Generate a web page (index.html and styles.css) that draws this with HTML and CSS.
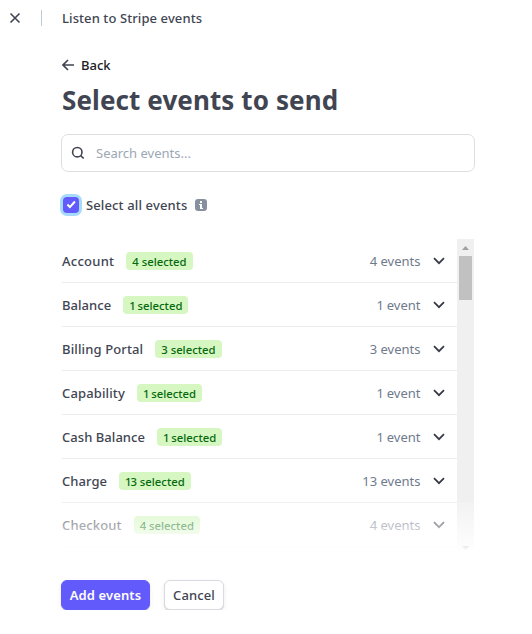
FILE: index.html
```html
<!DOCTYPE html>
<html lang="en">
<head>
<meta charset="utf-8">
<title>Listen to Stripe events</title>
<link rel="stylesheet" href="styles.css">
</head>
<body>
<header class="topbar">
  <svg class="close" width="12" height="12" viewBox="0 0 12 12"><path d="M1.5 1.5l9 9M10.5 1.5l-9 9"/></svg>
  <span class="divider"></span>
  <span class="topbar-title">Listen to Stripe events</span>
</header>
<main class="content">
  <a class="back"><svg width="12" height="12" viewBox="0 0 12 12"><path d="M6 1L1 6l5 5M1 6h11"/></svg><span>Back</span></a>
  <h1 class="title"><span>Select events to send</span></h1>
  <div class="search">
    <svg width="14" height="14" viewBox="0 0 14 14"><circle cx="6.3" cy="6.2" r="4.7"/><path d="M9.7 9.6l3 2.9"/></svg>
    <span>Search events...</span>
  </div>
  <div class="select-all">
    <span class="checkbox"><svg width="16" height="16" viewBox="0 0 16 16"><path d="M4.4 7.500l2.500 2.600 5-5.600"/></svg></span>
    <span class="select-label">Select all events</span>
    <svg class="info" width="12" height="12" viewBox="0 0 12 12"><rect width="12" height="12" rx="3" fill="#87909f"/><path d="M5 2h2v2H5zM4 5h3v4h1v1H5V6H4z" fill="#fff"/></svg>
  </div>
  <div class="list">
    <div class="rows">
      <div class="row"><span class="name wide">Account</span><span class="badge">4 selected</span><span class="count">4 events</span><svg class="chev" width="12" height="8" viewBox="0 0 12 8"><path d="M1 1.2l5 5 5-5"/></svg></div>
      <div class="row"><span class="name tight">Balance</span><span class="badge"><span class="one">1</span> selected</span><span class="count"><span class="one">1</span> event</span><svg class="chev" width="12" height="8" viewBox="0 0 12 8"><path d="M1 1.2l5 5 5-5"/></svg></div>
      <div class="row"><span class="name">Billing Portal</span><span class="badge">3 selected</span><span class="count">3 events</span><svg class="chev" width="12" height="8" viewBox="0 0 12 8"><path d="M1 1.2l5 5 5-5"/></svg></div>
      <div class="row"><span class="name">Capability</span><span class="badge"><span class="one">1</span> selected</span><span class="count"><span class="one">1</span> event</span><svg class="chev" width="12" height="8" viewBox="0 0 12 8"><path d="M1 1.2l5 5 5-5"/></svg></div>
      <div class="row"><span class="name tight">Cash Balance</span><span class="badge"><span class="one">1</span> selected</span><span class="count"><span class="one">1</span> event</span><svg class="chev" width="12" height="8" viewBox="0 0 12 8"><path d="M1 1.2l5 5 5-5"/></svg></div>
      <div class="row"><span class="name tight">Charge</span><span class="badge"><span class="one">1</span>3 selected</span><span class="count">13 events</span><svg class="chev" width="12" height="8" viewBox="0 0 12 8"><path d="M1 1.2l5 5 5-5"/></svg></div>
      <div class="row"><span class="name">Checkout</span><span class="badge">4 selected</span><span class="count">4 events</span><svg class="chev" width="12" height="8" viewBox="0 0 12 8"><path d="M1 1.2l5 5 5-5"/></svg></div>
    </div>
    <div class="scrollbar">
      <svg width="17" height="17" viewBox="0 0 17 17"><path d="M5 11l3.5-4 3.5 4z"/></svg>
      <span class="thumb"></span>
      <svg class="down" width="17" height="17" viewBox="0 0 17 17"><path d="M5 13l3.500 4 3.500-4z"/></svg>
    </div>
    <div class="fade"></div>
  </div>
  <div class="actions">
    <button class="btn primary"><span>Add events</span></button>
    <button class="btn"><span>Cancel</span></button>
  </div>
</main>
</body>
</html>
```

FILE: styles.css
```css
* { box-sizing: border-box; }
body {
  margin: 0;
  background: #fff;
  color: #414552;
  font: 500 13px/20px "Noto Sans", "Open Sans", sans-serif;
  overflow: hidden;
}
svg { display: block; flex: none; fill: none; stroke: #414552; stroke-width: 1.6; }
.topbar { display: flex; align-items: center; height: 36px; padding-left: 9px; }
.topbar-title { letter-spacing: .09px; }
.divider { width: 1px; height: 16px; margin: 0 20px; background: #c0c8d2; }
.content { width: 414px; margin-left: 61px; }
.back { display: flex; align-items: center; gap: 7px; height: 20px; margin-top: 19px; padding-left: 1px; color: #1a1b25; }
.title { height: 36px; margin: 7px 0 0; padding-left: 1px; font-size: 26px; line-height: 36px; font-weight: 700; letter-spacing: .1px; white-space: nowrap; }
.search { display: flex; align-items: center; gap: 11px; height: 38px; margin-top: 16px; padding-left: 9px; border: 1px solid #dcdee1; border-radius: 7px; color: #9ca7b5; font-weight: 400; }
.select-all { display: flex; align-items: center; height: 22px; margin-top: 22px; }
.select-label { letter-spacing: .13px; }
.checkbox { width: 16px; height: 16px; margin: 0 7px 0 2px; border-radius: 4px; background: #625afa; box-shadow: 0 0 0 3px #a5dafa; }
.checkbox svg { stroke: #fff; stroke-width: 2; }
.info { margin-left: 8px; stroke: none; }
.list { position: relative; display: flex; width: 413px; height: 311px; margin-top: 23px; overflow: hidden; }
.rows { flex: 1; }
.row { display: flex; align-items: center; height: 44px; margin-left: 1px; padding-right: 12px; border-bottom: 1px solid #ebedf0; white-space: nowrap; }
.name { letter-spacing: .13px; }
.tight { letter-spacing: .05px; }
.wide { letter-spacing: .26px; }
.badge { height: 18px; margin: 1px 0 0 12px; padding: 1px 6px 0; border-radius: 4px; background: #d6f7c2; color: #05690d; font-size: 11.300px; line-height: 18px; }
.one { letter-spacing: -1.100px; }
.count .one { letter-spacing: -.6px; }
.count { margin-left: auto; margin-right: 12.500px; color: #6f7a8d; font-weight: 400; }
.chev { margin-top: 1px; stroke: #353944; stroke-width: 1.7; }
.scrollbar { display: flex; flex-direction: column; align-items: center; width: 17px; background: #f0f0f0; }
.scrollbar svg { fill: #a0a0a0; stroke: none; }
.thumb { width: 13px; height: 44px; background: #c1c1c1; }
.scrollbar .down { margin-top: auto; fill: #505050; }
.fade { position: absolute; left: 0; right: 0; bottom: 0; height: 48px; background: linear-gradient(rgba(255,255,255,.15), rgba(255,255,255,.5) 45%, rgba(255,255,255,.95)); }
.actions { display: flex; gap: 14px; margin-top: 30px; }
.btn { width: 60px; height: 30px; padding: 0; border: 1px solid #d8dbe0; border-radius: 6px; background: #fff; color: #414552; font: inherit; letter-spacing: .1px; box-shadow: 0 1px 1px rgba(0,0,0,.14), 0 2px 5px rgba(60,66,87,.08); }
.primary { width: 89px; border-color: #625afa; background: #625afa; color: #fff; font-weight: 600; }
```
